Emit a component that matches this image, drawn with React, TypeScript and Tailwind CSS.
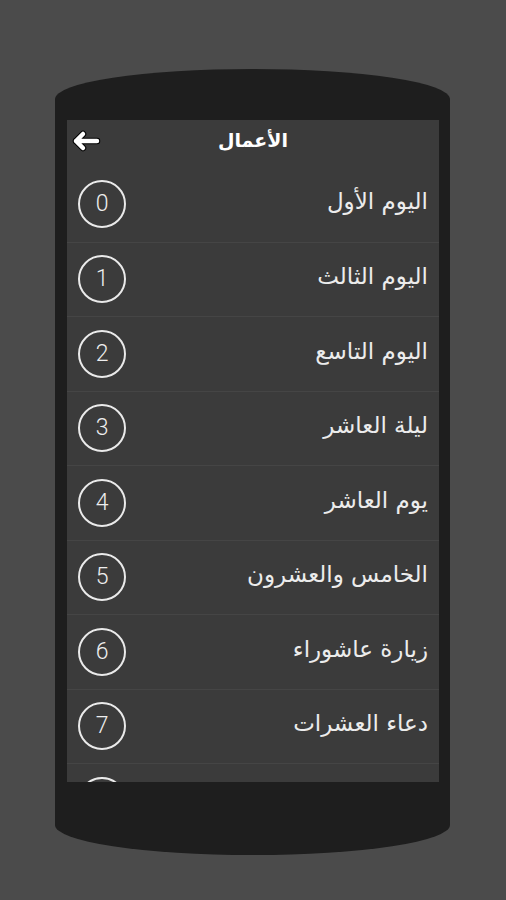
import React from 'react'

const ITEMS = [
  'اليوم الأول',
  'اليوم الثالث',
  'اليوم التاسع',
  'ليلة العاشر',
  'يوم العاشر',
  'الخامس والعشرون',
  'زيارة عاشوراء',
  'دعاء العشرات',
  '',
]

function BackArrow() {
  return (
    <svg width="30" height="24" viewBox="0 0 30 24">
      <path
        d="M26 12H5M12 5l-7 7 7 7"
        fill="none"
        stroke="#000"
        strokeWidth="6.5"
        strokeLinecap="round"
        strokeLinejoin="round"
      />
      <path
        d="M26 12H5M12 5l-7 7 7 7"
        fill="none"
        stroke="#fff"
        strokeWidth="4.5"
        strokeLinecap="round"
        strokeLinejoin="round"
      />
    </svg>
  )
}

export default function App() {
  return (
    <div className="w-[506px] h-[900px] bg-[#4b4b4b] pt-[69px] pl-[55px] overflow-hidden">
      {/* phone body */}
      <div className="w-[395px] h-[786px] rounded-[50%/30px] bg-[#1e1e1e] pt-[51px] pl-[12px]">
        {/* screen */}
        <div className="w-[372px] h-[662px] bg-[#3b3b3b] overflow-hidden" style={{ fontFamily: '"DejaVu Sans", sans-serif' }}>
          <div className="relative h-[47px] flex items-center justify-center">
            <div className="absolute left-[4px] top-[9px]">
              <BackArrow />
            </div>
            <span dir="rtl" className="text-[19px] font-bold text-white pb-[6px]">الأعمال</span>
          </div>

          <div dir="rtl">
            {ITEMS.map((label, i) => (
              <div
                key={i}
                className="h-[74.5px] flex items-center justify-between pr-[11px] pl-[11px] border-t border-[#454545] first:border-t-0"
              >
                <span className="text-[23px] text-[#ececec] pb-[6px]">{label}</span>
                <div className="w-[48px] h-[48px] rounded-full border-2 border-[#eaeaea] flex items-center justify-center">
                  <span className="text-[23px] font-light text-[#eeeeee]" style={{ fontFamily: 'Roboto, sans-serif' }}>
                    {i}
                  </span>
                </div>
              </div>
            ))}
          </div>
        </div>
      </div>
    </div>
  )
}
